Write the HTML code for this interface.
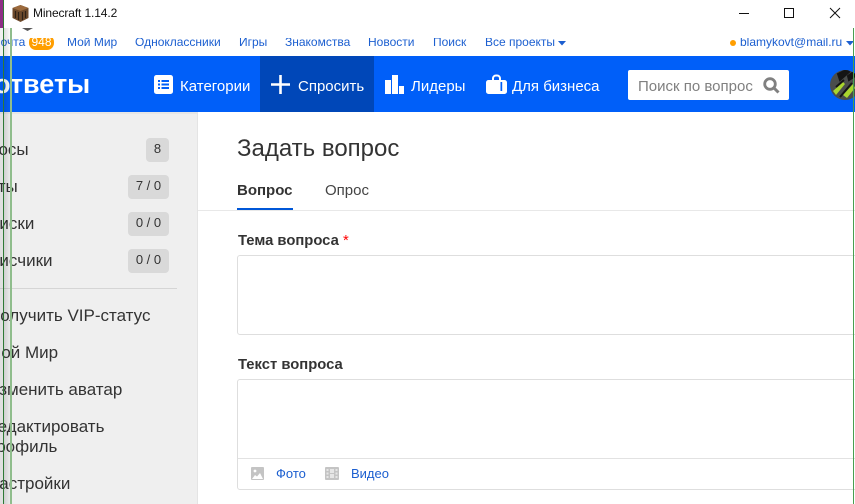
<!DOCTYPE html>
<html lang="ru"><head><meta charset="utf-8"><title>Minecraft 1.14.2</title>
<style>
html,body{margin:0;padding:0;background:#fff}
body{width:855px;height:504px;overflow:hidden;position:relative;font-family:"Liberation Sans",sans-serif;color:#333}
#w{position:absolute;left:0;top:0;width:855px;height:504px;overflow:hidden}
.a{position:absolute;white-space:nowrap}
.lnk{top:35px;font-size:12px;line-height:14px;color:#1c5fd0}
.nav{top:78px;font-size:15px;line-height:18px;color:#fff}
.side{font-size:17px;line-height:20px;color:#333}
.b{position:absolute;height:24px;background:#d9d9d9;border-radius:4px;font-size:13px;line-height:22px;text-align:center;color:#333}
</style></head><body><div id="w">
<!-- top links -->
<div class="a lnk" style="left:-8px">Почта</div>
<div class="a" style="left:29px;top:35px;width:25px;height:15px;background:#ff9e00;border-radius:7px;color:#fff;font-size:12px;line-height:15px;text-align:center">948</div>
<div class="a lnk" style="left:67px">Мой Мир</div>
<div class="a lnk" style="left:135px">Одноклассники</div>
<div class="a lnk" style="left:239px">Игры</div>
<div class="a lnk" style="left:285px">Знакомства</div>
<div class="a lnk" style="left:368px">Новости</div>
<div class="a lnk" style="left:433px">Поиск</div>
<div class="a lnk" style="left:485px">Все проекты</div>
<svg class="a" style="left:558px;top:41px" width="8" height="5"><path d="M0 0h8L4 4.500z" fill="#1c5fd0"/></svg>
<div class="a" style="left:730px;top:40px;width:6px;height:6px;border-radius:50%;background:#ff9e00"></div>
<div class="a lnk" style="left:740px">blamykovt@mail.ru</div>
<svg class="a" style="left:846px;top:41px" width="8" height="5"><path d="M0 0h8L4 4.500z" fill="#1c5fd0"/></svg>
<!-- title bar -->
<div class="a" style="left:0;top:0;width:855px;height:38px;background:#fff;z-index:5"></div>
<div class="a" style="left:0;top:0;width:3px;height:28px;background:#8e2f86;z-index:6"></div>
<svg class="a" style="left:12px;top:5px;z-index:6" width="17" height="17" viewBox="0 0 16 17"><path d="M8 0 16 3v10l-8 4-8-4V3z" fill="#6d4a2c"/><path d="M8 0 16 3 8 6 0 3z" fill="#9c6a3d"/><path d="M3 6v7M6 7v8M10 7v8M13 6v7" stroke="#2e2117" stroke-width="1.2"/></svg>
<div class="a" style="left:33px;top:6px;font-size:12px;line-height:15px;color:#111;letter-spacing:-.12px;z-index:6">Minecraft 1.14.2</div>
<svg class="a" style="left:735px;top:5px;z-index:6" width="110" height="16" viewBox="0 0 110 16"><path d="M4 8.500h10" stroke="#111" stroke-width="1"/><rect x="49.500" y="3.500" width="9" height="9" fill="none" stroke="#111"/><path d="M95 3l10 10M105 3 95 13" stroke="#111" stroke-width="1" fill="none"/></svg>
<svg class="a" style="left:22px;top:28px;z-index:6" width="12" height="4"><path d="M0 0h11L5.500 3z" fill="#555"/></svg>
<!-- blue header -->
<div class="a" style="left:0;top:56px;width:855px;height:56px;background:#005ff9"></div>
<div class="a" style="left:260px;top:56px;width:114px;height:56px;background:#0047b8"></div>
<div class="a" style="left:-6px;top:69px;font-size:27px;line-height:30px;font-weight:bold;color:#fff">ответы</div>
<svg class="a" style="left:154px;top:75px" width="19" height="19" viewBox="0 0 19 19"><rect width="19" height="19" rx="2.500" fill="#fff"/><path d="M4 5h2v2H4zM7.500 5H15v2H7.500zM4 8.500h2v2H4zM7.500 8.500H15v2H7.500zM4 12h2v2H4zM7.500 12H15v2H7.500z" fill="#005ff9"/></svg>
<div class="a nav" style="left:180px">Категории</div>
<svg class="a" style="left:271px;top:75px" width="19" height="19"><path d="M8.200 0h2.600v8.200H19v2.600h-8.200V19H8.200v-8.200H0V8.200h8.200z" fill="#fff"/></svg>
<div class="a nav" style="left:298px">Спросить</div>
<svg class="a" style="left:385px;top:75px" width="19" height="19"><path d="M0 5h6v14H0zM7 0h6v19H7zM14 11h5v8h-5z" fill="#fff"/></svg>
<div class="a nav" style="left:411px">Лидеры</div>
<svg class="a" style="left:486px;top:74px" width="21" height="20" viewBox="0 0 21 20"><path d="M2.500 6H6V4.500A4 4 0 0 1 10 .500h1a4 4 0 0 1 4 4V6h3.500A2.500 2.500 0 0 1 21 8.500v9a2.500 2.500 0 0 1-2.500 2.500h-16A2.500 2.500 0 0 1 0 17.500v-9A2.500 2.500 0 0 1 2.500 6zM8 6h5V4.500a2 2 0 0 0-2-2h-1a2 2 0 0 0-2 2zM14.500 8v9h1.700V8z" fill="#fff" fill-rule="evenodd"/></svg>
<div class="a nav" style="left:512px">Для бизнеса</div>
<div class="a" style="left:628px;top:70px;width:161px;height:30px;background:#fff;border-radius:2px"></div>
<div class="a" style="left:638px;top:78px;font-size:15px;line-height:18px;color:#808080">Поиск по вопрос</div>
<svg class="a" style="left:763px;top:77px" width="17" height="17" viewBox="0 0 17 17"><circle cx="7" cy="7" r="5.300" fill="none" stroke="#808080" stroke-width="2.800"/><path d="M11 11l4.500 4.500" stroke="#808080" stroke-width="3"/></svg>
<svg class="a" style="left:830px;top:70px" width="25" height="30" viewBox="0 0 25 30"><defs><clipPath id="c"><circle cx="15" cy="15" r="15"/></clipPath></defs><g clip-path="url(#c)"><rect width="30" height="30" fill="#4a4d4c"/><path d="M3 21 13 12l2 2L6 25zM13 25l10-11 2 4-8 10z" fill="#a9d52e"/><path d="M8 4l8-4 3 2-9 8zM6 17l8-7M18 6l7-5v5l-6 4zM10 27l12-14" stroke="#151515" stroke-width="2" fill="#151515"/></g></svg>
<!-- sidebar -->
<div class="a" style="left:0;top:112px;width:197px;height:392px;background:#efefef"></div>
<div class="a" style="left:197px;top:112px;width:1px;height:392px;background:#e4e4e4"></div>
<div class="a" style="left:0;top:112px;width:197px;height:2px;background:#e6e6e6"></div>
<div class="a side" style="left:-41px;top:140px">Вопросы</div>
<div class="a b" style="left:146px;width:23px;top:138px">8</div>
<div class="a side" style="left:-41px;top:177px">Ответы</div>
<div class="a b" style="left:128px;width:41px;top:175px">7 / 0</div>
<div class="a side" style="left:-41px;top:214px">Подписки</div>
<div class="a b" style="left:128px;width:41px;top:212px">0 / 0</div>
<div class="a side" style="left:-41px;top:251px">Подписчики</div>
<div class="a b" style="left:128px;width:41px;top:249px">0 / 0</div>
<div class="a" style="left:0;top:288px;width:177px;height:1px;background:#d5d5d5"></div>
<div class="a side" style="left:-12px;top:306px">Получить VIP-статус</div>
<div class="a side" style="left:-13px;top:343px">Мой Мир</div>
<div class="a side" style="left:-13px;top:380px">Изменить аватар</div>
<div class="a side" style="left:-13px;top:417px">Редактировать</div>
<div class="a side" style="left:-13px;top:437px">профиль</div>
<div class="a side" style="left:-13px;top:474px">Настройки</div>
<!-- main -->
<div class="a" style="left:237px;top:135px;font-size:24px;line-height:28px;color:#333">Задать вопрос</div>
<div class="a" style="left:237px;top:182px;font-size:15px;line-height:17px;font-weight:bold;color:#333">Вопрос</div>
<div class="a" style="left:325px;top:182px;font-size:15px;line-height:17px;color:#444">Опрос</div>
<div class="a" style="left:198px;top:210px;width:657px;height:1px;background:#e8e8e8"></div>
<div class="a" style="left:237px;top:208px;width:56px;height:2px;background:#0057d8"></div>
<div class="a" style="left:238px;top:233px;font-size:14.800px;line-height:17px;font-weight:bold;color:#333">Тема вопроса <span style="color:#f00;font-weight:normal">*</span></div>
<div class="a" style="left:237px;top:255px;width:640px;height:78px;border:1px solid #dedede;border-radius:3px;background:#fff"></div>
<div class="a" style="left:238px;top:357px;font-size:14.800px;line-height:17px;font-weight:bold;color:#333">Текст вопроса</div>
<div class="a" style="left:237px;top:379px;width:640px;height:109px;border:1px solid #dedede;border-radius:3px;background:#fff"></div>
<div class="a" style="left:238px;top:458px;width:617px;height:1px;background:#e2e2e2"></div>
<svg class="a" style="left:251px;top:467px" width="13" height="13" viewBox="0 0 13 13"><rect width="13" height="13" rx="1" fill="#c4c4c4"/><circle cx="4" cy="4" r="1.400" fill="#fff"/><path d="M1 12l3-4 2 1.500L9 6l3 6z" fill="#fff"/></svg>
<div class="a" style="left:276px;top:466px;font-size:13px;line-height:15px;color:#1c5fd0">Фото</div>
<svg class="a" style="left:325px;top:467px" width="14" height="13" viewBox="0 0 14 13"><rect width="14" height="13" rx="1" fill="#c4c4c4"/><path d="M1.500 2h2v2h-2zM1.500 5.500h2v2h-2zM1.500 9h2v2h-2zM10.500 2h2v2h-2zM10.500 5.500h2v2h-2zM10.500 9h2v2h-2zM5 2h4v4H5zM5 7h4v4H5z" fill="#e6e6e6"/></svg>
<div class="a" style="left:351px;top:466px;font-size:13px;line-height:15px;color:#1c5fd0">Видео</div>
<!-- overlay window edges -->
<div class="a" style="left:0;top:28px;width:3px;height:476px;background:rgba(0,0,0,.06);z-index:7"></div>
<div class="a" style="left:3px;top:0;width:1px;height:504px;background:#2f7a35;z-index:7"></div>
<div class="a" style="left:4px;top:28px;width:6px;height:476px;background:linear-gradient(90deg,rgba(0,0,0,.13),rgba(0,0,0,.02));z-index:7"></div>
<div class="a" style="left:10px;top:28px;width:2px;height:476px;background:#8fbd8c;z-index:7"></div>
<div class="a" style="left:853px;top:28px;width:1px;height:476px;background:#4a9e4f;z-index:7"></div>
</div></body></html>
